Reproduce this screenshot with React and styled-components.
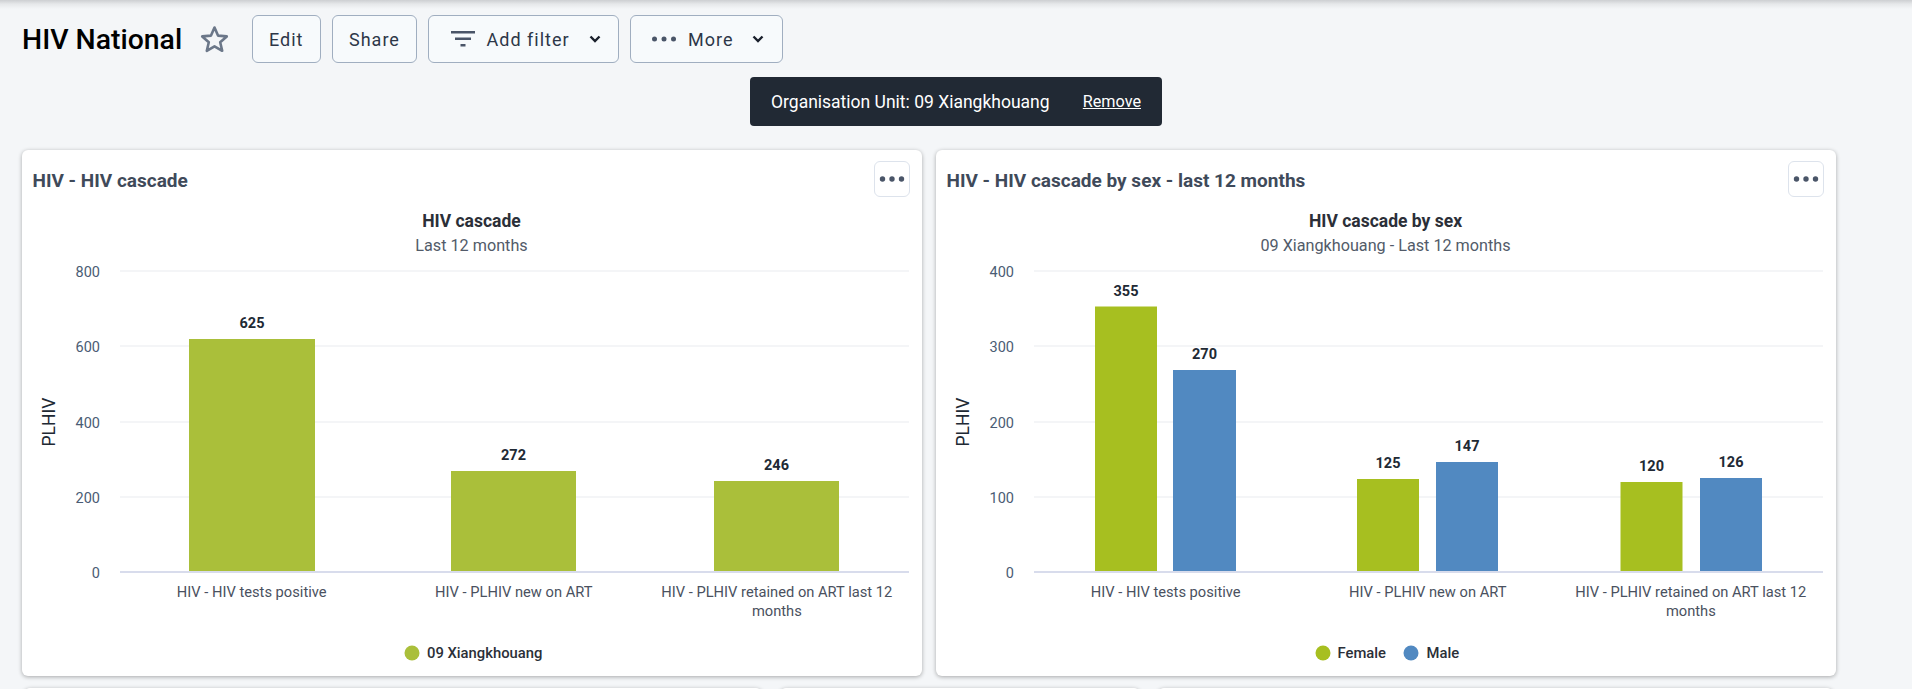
import React from 'react';
import styled, { createGlobalStyle } from 'styled-components';

const GlobalStyle = createGlobalStyle`
  html, body {
    margin: 0;
    height: 100%;
    overflow: hidden;
    background: #f4f6f8;
    font-family: Roboto, "Liberation Sans", sans-serif;
  }
`;

const Page = styled.div`
  display: flex;
  flex-direction: column;
  height: 689px;
  overflow: hidden;
`;

const TopEdge = styled.div`
  height: 9px;
  flex: none;
  background: linear-gradient(#cdcfd2, #e6e8ea 45%, #f4f6f8);
`;

const Toolbar = styled.div`
  display: flex;
  align-items: center;
  height: 48px;
  flex: none;
  margin-top: 6px;
  padding-left: 22px;
`;

const Title = styled.h1`
  margin: 0;
  font-size: 28.4px;
  font-weight: 500;
  color: #000;
  width: 178px;
  white-space: nowrap;
`;

const StarBox = styled.div`
  width: 52px;
  display: flex;
  align-items: center;
`;

const Buttons = styled.div`
  display: flex;
  gap: 11px;
`;

const Button = styled.button`
  display: flex;
  align-items: center;
  height: 48px;
  width: ${(p) => p.$w}px;
  padding: 0 0 0 ${(p) => p.$left}px;
  box-sizing: border-box;
  border: 1px solid #a0aec0;
  border-radius: 6px;
  background: #f7fafc;
  color: #2d3748;
  font-family: inherit;
  font-size: 18px;
  letter-spacing: 1px;
  white-space: nowrap;
`;

const ButtonIcon = styled.svg`
  flex: none;
  margin-right: ${(p) => p.$gap}px;
`;

const Chevron = styled.svg`
  flex: none;
  margin-left: ${(p) => p.$gap}px;
`;

const FilterRow = styled.div`
  display: flex;
  justify-content: center;
  margin-top: 14px;
  flex: none;
`;

const FilterChip = styled.div`
  display: flex;
  align-items: center;
  justify-content: space-between;
  width: 412px;
  height: 49px;
  padding: 0 21px;
  box-sizing: border-box;
  background: #212934;
  border-radius: 4px;
  color: #fff;
  font-size: 17.5px;
`;

const RemoveLink = styled.a`
  color: #fff;
  font-size: 16.2px;
  text-decoration: underline;
`;

const CardRow = styled.div`
  display: flex;
  flex: none;
  gap: ${(p) => p.$gap}px;
  margin-top: ${(p) => p.$top}px;
  padding-left: ${(p) => p.$left}px;
`;

const Card = styled.section`
  width: ${(p) => p.$w}px;
  height: ${(p) => p.$h}px;
  flex: none;
  background: #fff;
  border-radius: 6px;
  box-shadow: 0 1px 4px rgba(0, 0, 0, 0.32);
`;

const CardHeader = styled.header`
  display: flex;
  align-items: flex-start;
  justify-content: space-between;
  height: 56px;
  padding: 11px 12px 0 10.5px;
  box-sizing: border-box;
`;

const CardTitle = styled.h2`
  margin: 9px 0 0;
  font-size: 19px;
  font-weight: 700;
  line-height: 21px;
  color: #3f4a5a;
`;

const DotsButton = styled.button`
  display: flex;
  align-items: center;
  justify-content: center;
  width: 36px;
  height: 36px;
  padding: 0;
  border: 1px solid #dde3ec;
  border-radius: 6px;
  background: #fff;
`;

const ChartSvg = styled.svg`
  display: block;
`;

const ChartTitle = styled.text`
  font-size: 17.5px;
  font-weight: 700;
  fill: #2b2f38;
  text-anchor: middle;
`;

const ChartSubtitle = styled.text`
  font-size: 16.2px;
  fill: #525b69;
  text-anchor: middle;
`;

const TickLabel = styled.text`
  font-size: 14.5px;
  fill: #4a5c74;
  text-anchor: end;
`;

const AxisTitle = styled.text`
  font-size: 17.5px;
  fill: #212934;
  text-anchor: middle;
`;

const CategoryLabel = styled.text`
  font-size: 14.7px;
  fill: #4a5160;
  text-anchor: middle;
`;

const ValueLabel = styled.text`
  font-size: 14.5px;
  font-weight: 700;
  fill: #212934;
  text-anchor: middle;
`;

const LegendLabel = styled.text`
  font-size: 14.8px;
  font-weight: 500;
  fill: #2b2f38;
`;

const GREEN_A = '#aabf3a';
const GREEN_B = '#a7bf20';
const BLUE = '#5189c1';

const TICK_Y = [65, 140, 216, 291, 366];

const categories = [
  ['HIV - HIV tests positive'],
  ['HIV - PLHIV new on ART'],
  ['HIV - PLHIV retained on ART last 12', 'months'],
];
const CENTERS = [229.7, 491.8, 754.8];

// bar tops are in svg coordinates, read off the chart
const cascade = {
  title: 'HIV cascade',
  subtitle: 'Last 12 months',
  ticks: ['0', '200', '400', '600', '800'],
  bars: [
    { x: 167, w: 126, top: 133, value: 625, fill: GREEN_A },
    { x: 429, w: 125, top: 265, value: 272, fill: GREEN_A },
    { x: 692, w: 125, top: 275, value: 246, fill: GREEN_A },
  ],
  legend: [{ dot: 390, text: 405, label: '09 Xiangkhouang', fill: GREEN_A }],
};

const bySex = {
  title: 'HIV cascade by sex',
  subtitle: '09 Xiangkhouang - Last 12 months',
  ticks: ['0', '100', '200', '300', '400'],
  bars: [
    { x: 159, w: 62, top: 100.5, value: 355, fill: GREEN_B },
    { x: 237, w: 63, top: 164, value: 270, fill: BLUE },
    { x: 421, w: 62, top: 273, value: 125, fill: GREEN_B },
    { x: 500, w: 62, top: 256, value: 147, fill: BLUE },
    { x: 684.5, w: 62, top: 276, value: 120, fill: GREEN_B },
    { x: 764, w: 62, top: 272, value: 126, fill: BLUE },
  ],
  legend: [
    { dot: 387, text: 401.5, label: 'Female', fill: GREEN_B },
    { dot: 475, text: 490.5, label: 'Male', fill: BLUE },
  ],
};

function Chart({ data }) {
  return (
    <ChartSvg width="900" height="470" viewBox="0 0 900 470">
      <ChartTitle x="449.5" y="21">{data.title}</ChartTitle>
      <ChartSubtitle x="449.5" y="45">{data.subtitle}</ChartSubtitle>
      <AxisTitle transform="translate(32.5 216) rotate(-90)">PLHIV</AxisTitle>
      {TICK_Y.map((y, i) => (
        <React.Fragment key={y}>
          <line
            x1="98"
            x2="887"
            y1={TICK_Y[4 - i]}
            y2={TICK_Y[4 - i]}
            stroke={i === 0 ? '#d8dcec' : '#f1f2f4'}
            strokeWidth={i === 0 ? 2 : 1.5}
          />
          <TickLabel x="78" y={TICK_Y[4 - i] + 6}>{data.ticks[i]}</TickLabel>
        </React.Fragment>
      ))}
      {data.bars.map((b) => (
        <React.Fragment key={b.x}>
          <rect x={b.x} y={b.top} width={b.w} height={365 - b.top} fill={b.fill} />
          <ValueLabel x={b.x + b.w / 2} y={b.top - 11}>{b.value}</ValueLabel>
        </React.Fragment>
      ))}
      {categories.map((lines, i) =>
        lines.map((line, j) => (
          <CategoryLabel key={line} x={CENTERS[i]} y={391 + j * 19}>{line}</CategoryLabel>
        ))
      )}
      {data.legend.map((l) => (
        <React.Fragment key={l.label}>
          <circle cx={l.dot} cy="447" r="7.5" fill={l.fill} />
          <LegendLabel x={l.text} y="452">{l.label}</LegendLabel>
        </React.Fragment>
      ))}
    </ChartSvg>
  );
}

function Dots({ color = '#4a5568', r = 2.5, step = 9, size = 26 }) {
  return (
    <svg width={size} height="8" viewBox={`0 0 ${size} 8`}>
      {[-1, 0, 1].map((i) => (
        <circle key={i} cx={size / 2 + i * step} cy="4" r={r} fill={color} />
      ))}
    </svg>
  );
}

function ChevronDown({ gap }) {
  return (
    <Chevron $gap={gap} width="12" height="8" viewBox="0 0 12 8">
      <path d="M1.5 1.5 L6 6 L10.5 1.5" fill="none" stroke="#1a202c" strokeWidth="2.4" />
    </Chevron>
  );
}

function DashboardCard({ title, data }) {
  return (
    <Card $w={900} $h={526}>
      <CardHeader>
        <CardTitle>{title}</CardTitle>
        <DotsButton aria-label="More options">
          <Dots color="#4a5568" r={2.7} step={9.5} size={26} />
        </DotsButton>
      </CardHeader>
      <Chart data={data} />
    </Card>
  );
}

export default function App() {
  return (
    <Page>
      <GlobalStyle />
      <TopEdge />
      <Toolbar>
        <Title>HIV National</Title>
        <StarBox>
          <svg width="29" height="28" viewBox="0 0 29 28">
            <path
              d="M14.5 2.5 L18 10.6 L26.8 11.4 L20.2 17.2 L22.2 25.8 L14.5 21.3 L6.8 25.8 L8.8 17.2 L2.2 11.4 L11 10.6 Z"
              fill="none"
              stroke="#6b7789"
              strokeWidth="2.6"
              strokeLinejoin="round"
            />
          </svg>
        </StarBox>
        <Buttons>
          <Button $w={68.5} $left={16}>Edit</Button>
          <Button $w={85.5} $left={16.5}>Share</Button>
          <Button $w={190.5} $left={21.5}>
            <ButtonIcon $gap={12} width="24" height="18" viewBox="0 0 24 18">
              <rect x="0" y="1" width="24" height="2.5" fill="#4a5568" />
              <rect x="4" y="7.5" width="16" height="2.5" fill="#4a5568" />
              <rect x="9.5" y="14" width="5" height="2.5" fill="#4a5568" />
            </ButtonIcon>
            Add filter
            <ChevronDown gap={19} />
          </Button>
          <Button $w={153.5} $left={20.5}>
            <ButtonIcon $gap={11} width="26" height="8" viewBox="0 0 26 8">
              <circle cx="3.5" cy="4" r="2.5" fill="#4a5568" />
              <circle cx="13" cy="4" r="2.5" fill="#4a5568" />
              <circle cx="22.5" cy="4" r="2.5" fill="#4a5568" />
            </ButtonIcon>
            More
            <ChevronDown gap={19} />
          </Button>
        </Buttons>
      </Toolbar>
      <FilterRow>
        <FilterChip>
          <span>Organisation Unit: 09 Xiangkhouang</span>
          <RemoveLink>Remove</RemoveLink>
        </FilterChip>
      </FilterRow>
      <CardRow $gap={14} $top={24} $left={22}>
        <DashboardCard title="HIV - HIV cascade" data={cascade} />
        <DashboardCard title="HIV - HIV cascade by sex - last 12 months" data={bySex} />
      </CardRow>
      <CardRow $gap={18} $top={12} $left={24}>
        <Card $w={738} $h={300} />
        <Card $w={360} $h={300} />
        <Card $w={675} $h={300} />
      </CardRow>
    </Page>
  );
}
